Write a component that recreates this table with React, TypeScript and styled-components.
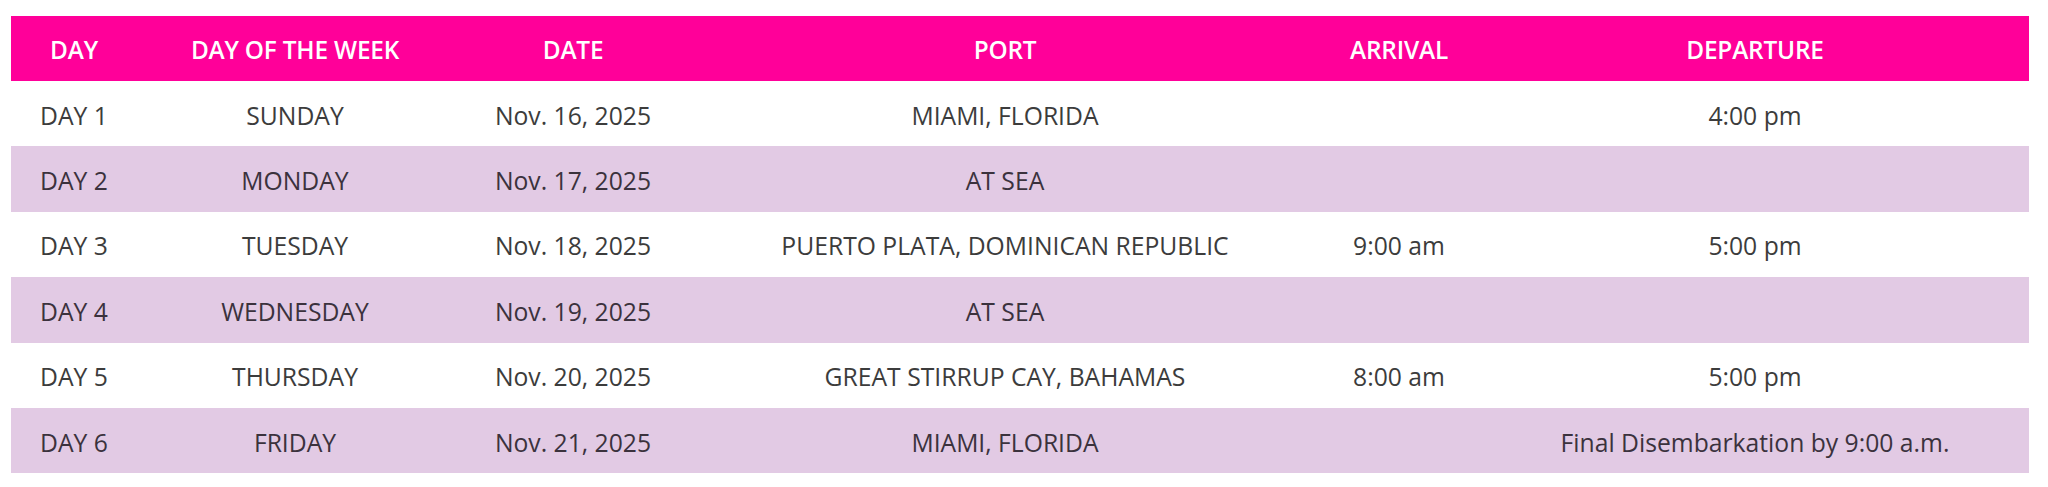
import React from "react";
import styled, { createGlobalStyle } from "styled-components";

const GlobalStyle = createGlobalStyle`
  html, body { margin: 0; padding: 0; background: #ffffff; }
  body { font-family: "Open Sans", "Liberation Sans", sans-serif; }
`;

const Page = styled.div`
  padding: 16px 19px 14px 11px;
`;

const Table = styled.div`
  display: grid;
  grid-template-columns: 126px 316px 240px 624px 164px 548px;
  width: 2018px;
`;

const HeadCell = styled.div`
  height: 65px;
  background: #ff0099;
  color: #ffffff;
  font-weight: 600;
  font-size: 24.4px;
  letter-spacing: -0.2px;
  display: flex;
  align-items: center;
  justify-content: center;
  padding-top: 2px;
  box-sizing: border-box;
`;

const Cell = styled.div<{ $striped: boolean }>`
  height: 65.4px;
  background: ${(p) => (p.$striped ? "#e2cae4" : "#ffffff")};
  color: ${(p) => (p.$striped ? "#3b323d" : "#3c3c3c")};
  font-size: 24.7px;
  display: flex;
  align-items: center;
  justify-content: center;
  padding-top: 3px;
  box-sizing: border-box;
  white-space: nowrap;
`;

const headers = ["DAY", "DAY OF THE WEEK", "DATE", "PORT", "ARRIVAL", "DEPARTURE"];

const rows: string[][] = [
  ["DAY 1", "SUNDAY", "Nov. 16, 2025", "MIAMI, FLORIDA", "", "4:00 pm"],
  ["DAY 2", "MONDAY", "Nov. 17, 2025", "AT SEA", "", ""],
  ["DAY 3", "TUESDAY", "Nov. 18, 2025", "PUERTO PLATA, DOMINICAN REPUBLIC", "9:00 am", "5:00 pm"],
  ["DAY 4", "WEDNESDAY", "Nov. 19, 2025", "AT SEA", "", ""],
  ["DAY 5", "THURSDAY", "Nov. 20, 2025", "GREAT STIRRUP CAY, BAHAMAS", "8:00 am", "5:00 pm"],
  ["DAY 6", "FRIDAY", "Nov. 21, 2025", "MIAMI, FLORIDA", "", "Final Disembarkation by 9:00 a.m."],
];

export default function App() {
  return (
    <>
      <GlobalStyle />
      <Page>
        <Table>
          {headers.map((h) => (
            <HeadCell key={h}>{h}</HeadCell>
          ))}
          {rows.map((r, i) =>
            r.map((c, j) => (
              <Cell key={`${i}-${j}`} $striped={i % 2 === 1}>
                {c}
              </Cell>
            ))
          )}
        </Table>
      </Page>
    </>
  );
}
